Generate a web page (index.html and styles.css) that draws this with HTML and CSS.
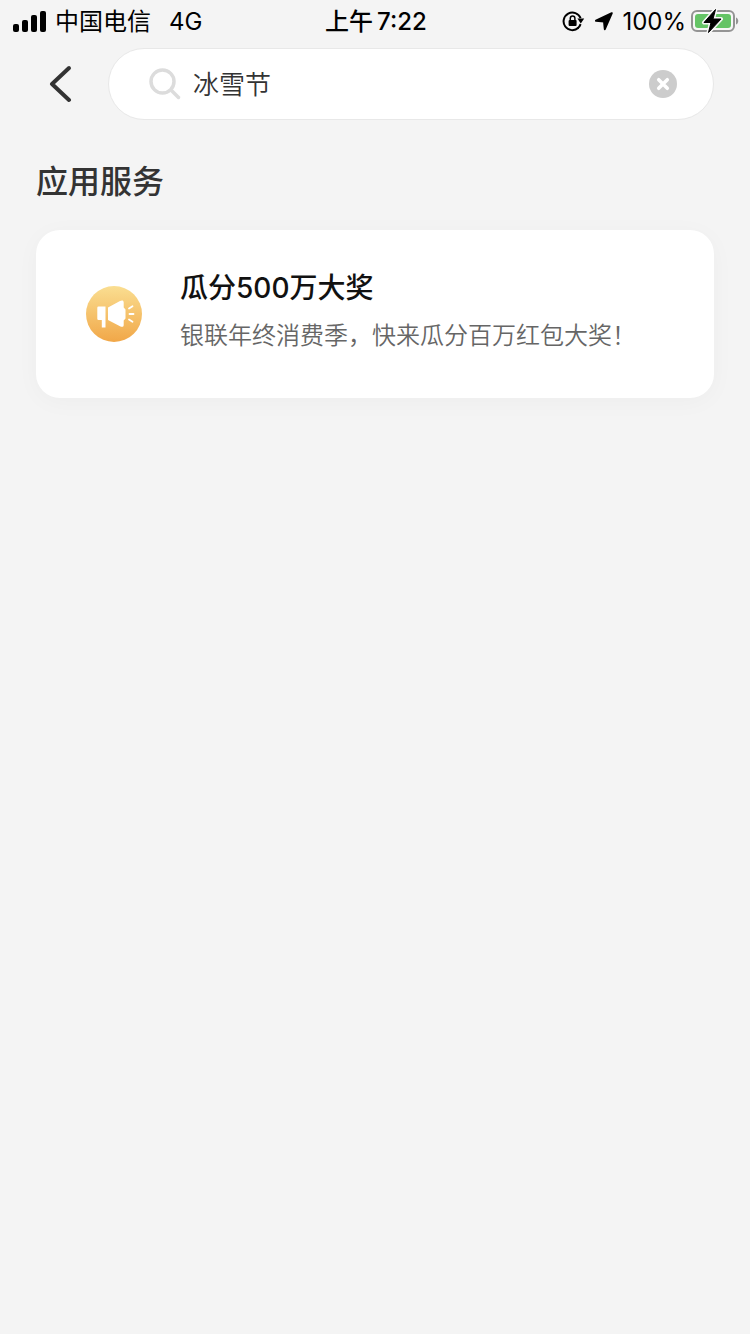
FILE: index.html
```html
<!DOCTYPE html>
<html lang="zh-CN">
<head>
<meta charset="utf-8">
<meta name="viewport" content="width=device-width, initial-scale=1">
<title>应用服务</title>
<link rel="stylesheet" href="styles.css">
</head>
<body>
<div class="status">
  <div class="status-left">
    <svg class="signal" viewBox="0 0 33 21" aria-hidden="true">
      <rect x="0" y="13" width="6" height="8" rx="2"/>
      <rect x="9" y="9" width="6" height="12" rx="2"/>
      <rect x="18" y="4" width="6" height="17" rx="2"/>
      <rect x="27" y="0" width="6" height="21" rx="2"/>
    </svg>
    <span class="carrier">中国电信</span>
    <span class="network">4G</span>
  </div>
  <div class="time"><span>上午</span><span>7:22</span></div>
  <div class="status-right">
    <svg class="lock" viewBox="0 0 24 22" aria-hidden="true">
      <path d="M16.4 17.8A8.8 8.8 0 1 1 18.6 8.2" fill="none" stroke="#000" stroke-width="2"/>
      <path d="M15.4 8.6h6.8l-3.4 4.8z"/>
      <path d="M15.4 18.5a8.8 8.8 0 0 0 3.2-4.4" fill="none" stroke="#000" stroke-width="2"/>
      <rect x="6.6" y="10" width="8" height="6" rx="1"/>
      <path d="M8.3 10.5V8.2a2.3 2.3 0 0 1 4.6 0v2.3" fill="none" stroke="#000" stroke-width="1.5"/>
    </svg>
    <svg class="locate" viewBox="0 0 20 20" aria-hidden="true"><path d="M17.800 2.200 2 9.700l8 .7.800 7.800z" stroke="#000" stroke-width="2" stroke-linejoin="round"/></svg>
    <span class="percent">100%</span>
    <svg class="battery" viewBox="0 0 48 26" aria-hidden="true">
      <rect x="1" y="3" width="42" height="20" rx="5" fill="#f7f7f7" stroke="#949494" stroke-width="2"/>
      <rect x="4" y="6" width="36" height="14" rx="3" fill="#65c466"/>
      <path d="M45 9.500c3 1 3 6 0 7z" fill="#949494"/>
      <path d="M24.500 1.500 13 14.500h7L17.500 24.500l12.500-13.500h-8z" stroke="#f7f7f7" stroke-width="4" stroke-linejoin="round"/>
      <path d="M24.500 1.500 13 14.500h7L17.500 24.500l12.500-13.500h-8z" stroke="#000" stroke-width="1" stroke-linejoin="round"/>
    </svg>
  </div>
</div>
<header class="topbar">
  <button class="back" type="button" aria-label="返回">
    <svg viewBox="0 0 24 38" aria-hidden="true"><path d="M21 3 4 19l17 16" fill="none" stroke="#333" stroke-width="4" stroke-linecap="round" stroke-linejoin="round"/></svg>
  </button>
  <form class="search" role="search">
    <svg class="glass" viewBox="0 0 32 32" aria-hidden="true"><g fill="none" stroke="#dcdcdc" stroke-width="3.500" stroke-linecap="round"><circle cx="13.500" cy="13.500" r="11.500"/><path d="m22.500 22.500 7 7"/></g></svg>
    <input class="query" type="text" aria-label="搜索" value="冰雪节">
    <button class="clear" type="button" aria-label="清除">
      <svg viewBox="0 0 28 28" aria-hidden="true"><circle cx="14" cy="14" r="14" fill="#ccc"/><path d="m9.700 9.700 8.600 8.600m0-8.600-8.600 8.600" stroke="#fff" stroke-width="3.500" stroke-linecap="round"/></svg>
    </button>
  </form>
</header>
<main class="results">
  <h1 class="heading">应用服务</h1>
  <a class="card" href="#">
    <svg class="badge" viewBox="0 0 56 56" aria-hidden="true">
      <defs><linearGradient id="gold" x1="0" y1="0" x2="0" y2="1"><stop offset="0" stop-color="#fade91"/><stop offset="1" stop-color="#f1a748"/></linearGradient></defs>
      <circle cx="28" cy="28" r="28" fill="url(#gold)"/>
      <path d="M12.500 20.500h7v21h-3.700v-7.500h-3.300q-1.200 0-1.200-1.200V21.700q0-1.200 1.200-1.200z" fill="#fff"/>
      <path d="M22 21.500 34 15c2-1 3.700-.7 3.700 1.500v5l1.800 2v9l-1.800 2v4.500c0 2-1.700 2.300-3.700 1.300L22 34z" fill="#fff"/>
      <path d="m43 22.500 3.500-2.300M43.500 28h4M43 33.500l3.500 2.300" fill="none" stroke="#fff" stroke-width="1.800" stroke-linecap="round"/>
    </svg>
    <span class="copy">
      <span class="name">瓜分500万大奖</span>
      <span class="detail">银联年终消费季，快来瓜分百万红包大奖！</span>
    </span>
  </a>
</main>
</body>
</html>
```

FILE: styles.css
```css
* { box-sizing: border-box; }
body {
  margin: 0;
  min-height: 100vh;
  background: #f4f4f4;
  color: #333;
  font-family: Inter, "Noto Sans CJK SC", sans-serif;
}
svg { display: block; flex: none; }
button { padding: 0; border: 0; background: none; cursor: pointer; }
.status {
  display: grid;
  grid-template-columns: 1fr auto 1fr;
  align-items: center;
  height: 40px;
  padding: 0 11px 0 13px;
  color: #000;
  font-size: 24px;
  line-height: 40px;
  white-space: nowrap;
}
.status-left, .status-right, .time { display: flex; align-items: center; }
.status span { padding-top: 2px; }
.signal { width: 33px; height: 21px; }
.carrier { margin-left: 9px; }
.network { margin-left: 18px; }
.time { gap: 4px; font-weight: 500; }
.status-right { justify-content: flex-end; }
.lock { width: 24px; height: 22px; }
.locate { width: 20px; height: 20px; margin: 0 8px; }
.battery { width: 48px; height: 26px; margin-left: 5px; }
.topbar {
  display: flex;
  align-items: center;
  padding: 8px 36px 0;
}
.back { width: 48px; margin-right: 24px; padding-left: 12px; }
.back svg { width: 24px; height: 38px; }
.search {
  display: flex;
  flex: 1;
  align-items: center;
  height: 72px;
  padding: 0 36px 0 40px;
  border: 1px solid #e8e8e8;
  border-radius: 36px;
  background: #fff;
}
.glass { width: 32px; height: 32px; }
.query {
  flex: 1;
  min-width: 0;
  margin: 0 12px;
  padding: 2px 0 0;
  border: 0;
  outline: 0;
  background: none;
  color: #333;
  font: inherit;
  font-size: 26px;
  font-weight: 350;
  line-height: 40px;
}
.clear svg { width: 28px; height: 28px; }
.results { padding: 38px 36px; }
.heading {
  margin: 0 0 24px;
  font-size: 32px;
  font-weight: 500;
  line-height: 48px;
}
.card {
  display: flex;
  align-items: center;
  padding: 34px 50px 38px;
  border-radius: 24px;
  background: #fff;
  box-shadow: 0 4px 24px rgba(0, 0, 0, 0.03);
  color: inherit;
  text-decoration: none;
}
.badge { width: 56px; height: 56px; margin: 4px 38px 0 0; }
.copy { display: flex; flex-direction: column; }
.name { color: #111; font-size: 28px; font-weight: 500; line-height: 48px; }
.detail { color: #666; font-size: 24px; font-weight: 350; line-height: 48px; }
```
